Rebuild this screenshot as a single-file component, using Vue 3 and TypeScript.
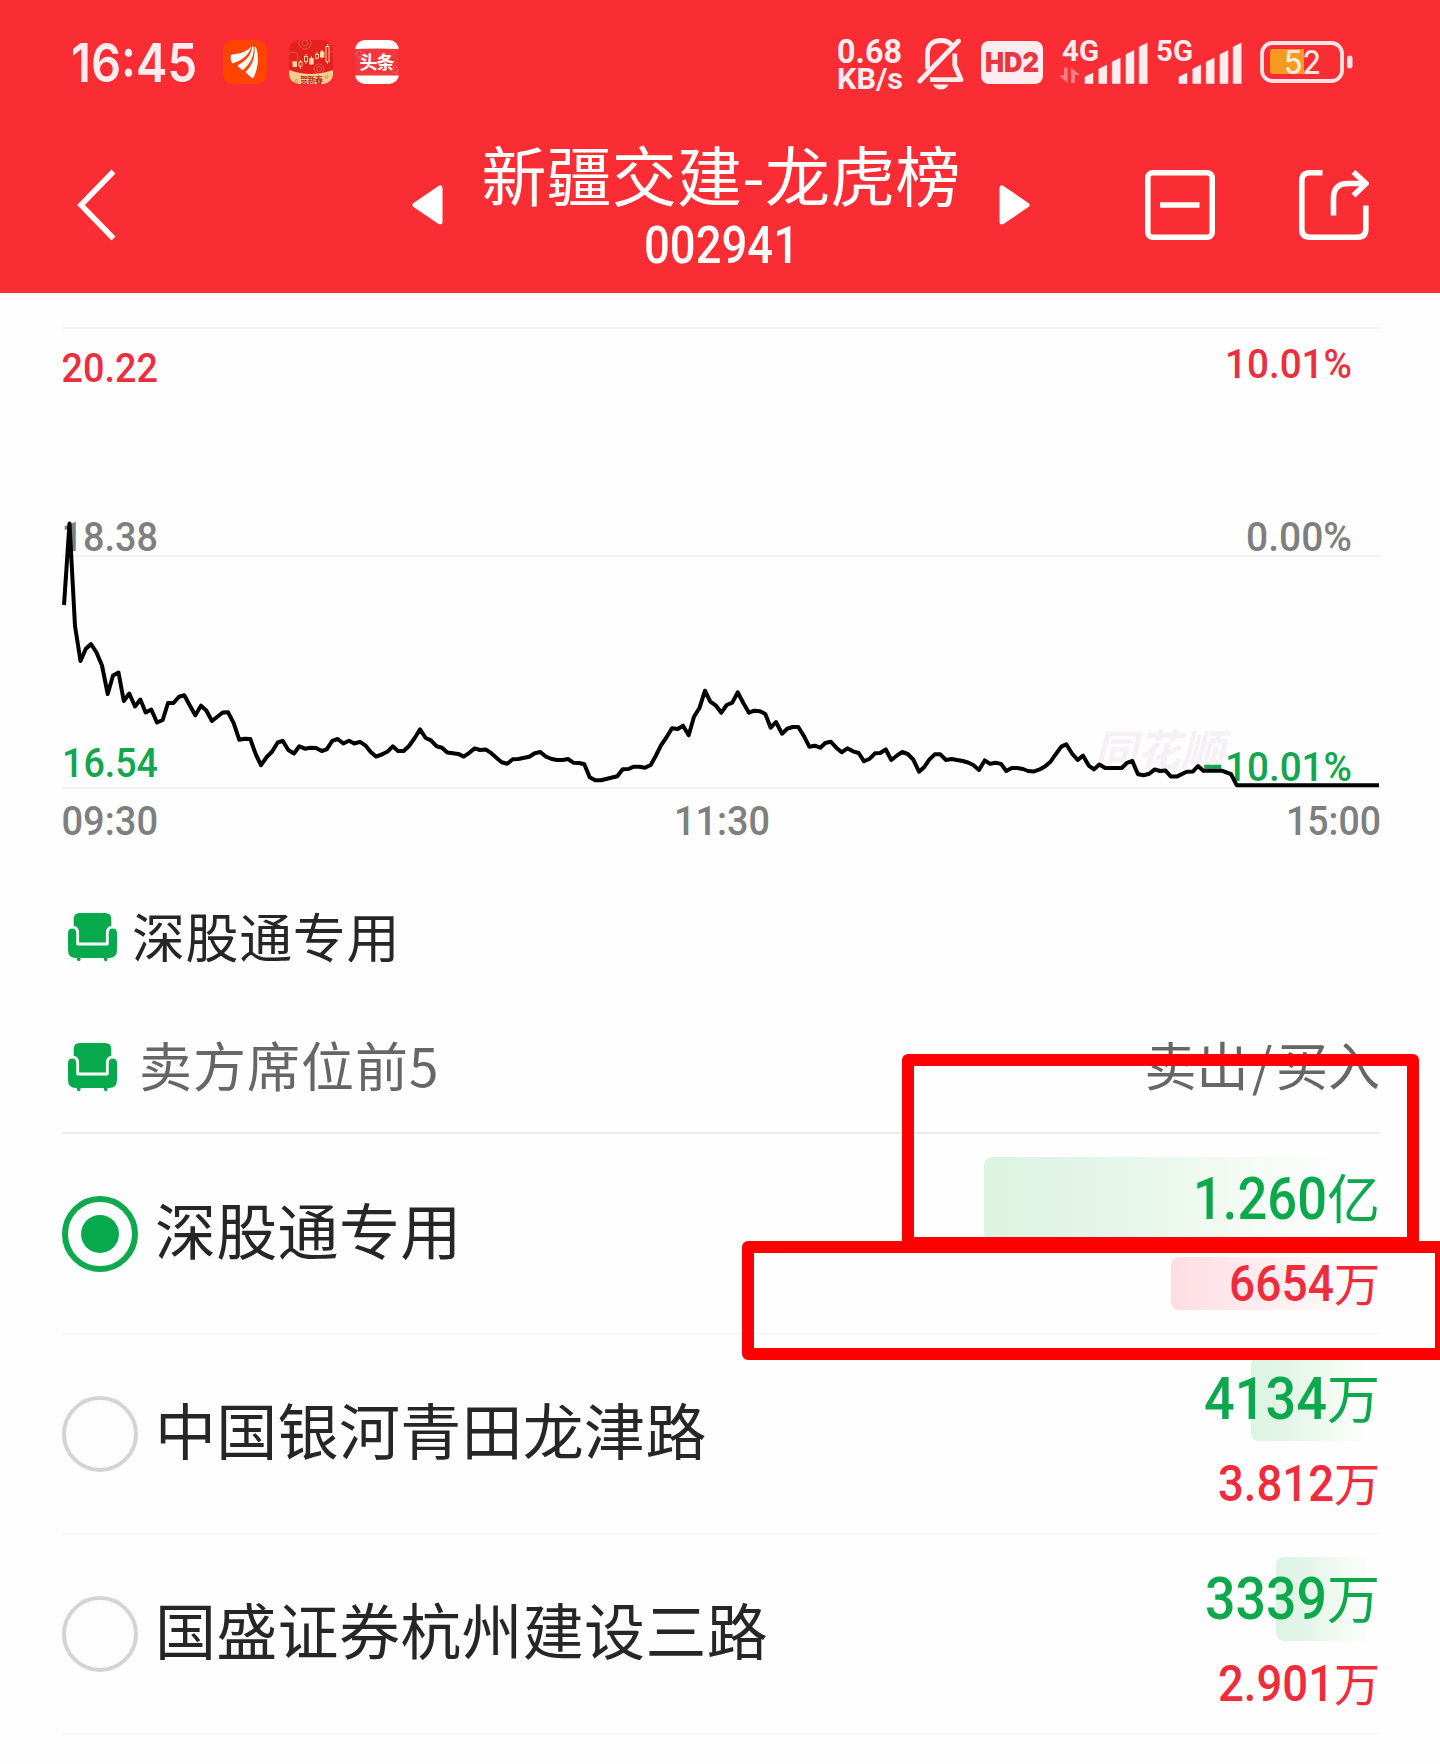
<script setup lang="ts">
import { defineComponent, h } from 'vue'

interface Seat {
  name: string
  selected: boolean
  sell: { value: string; width: number; unit: string; bar: number }
  buy: { value: string; width: number; unit: string; bar: number }
}

// Single line of digits set to a fixed advance width; its box is exactly cap-height tall.
const FitText = defineComponent({
  props: {
    text: { type: String, required: true },
    width: { type: Number, required: true },
    size: { type: Number, required: true },
  },
  setup(props) {
    return () => {
      const height = props.size * 0.711
      return h(
        'svg',
        { width: props.width, height, style: { overflow: 'visible', flex: 'none', display: 'block' } },
        [
          h(
            'text',
            {
              x: 0,
              y: height,
              fill: 'currentColor',
              'font-size': props.size,
              textLength: props.width,
              lengthAdjust: 'spacingAndGlyphs',
            },
            props.text,
          ),
        ],
      )
    }
  },
})

const seats: Seat[] = [
  {
    name: '深股通专用',
    selected: true,
    sell: { value: '1.260', width: 134, unit: '亿', bar: 398 },
    buy: { value: '6654', width: 105, unit: '万', bar: 211 },
  },
  {
    name: '中国银河青田龙津路',
    selected: false,
    sell: { value: '4134', width: 123, unit: '万', bar: 131 },
    buy: { value: '3.812', width: 116, unit: '万', bar: 0 },
  },
  {
    name: '国盛证券杭州建设三路',
    selected: false,
    sell: { value: '3339', width: 122, unit: '万', bar: 106 },
    buy: { value: '2.901', width: 116, unit: '万', bar: 0 },
  },
]

const signalBars = [
  { x: 0, top: 33 },
  { x: 13.8, top: 25 },
  { x: 27.2, top: 18 },
  { x: 41, top: 10.5 },
  { x: 54.2, top: 3 },
]

const priceLine = `64,605 69.5,523.5 75,626 80.5,661 85.7,649 91,644 96.5,652.5 102,665.5 107.7,694 113,675.5 118.5,672.5
123.8,701 129.3,693.5 135,706.5 140.3,699.5 145.7,712.5 151.3,709.5 157,722.5 162.7,720 168,703 173.5,703 179,696.7
184.3,695.3 189.7,705.3 195.3,715.3 201,705.7 206.3,710.5 212,721 217.3,716.7 222.7,712.5 228,712.2 233.7,723.2
239.3,739.8 244.7,738.7 250.3,739 255.7,754.2 261,765.2 266.7,757 272,751.8 277.7,742.5 282.7,740.8 288.3,750
294,753.5 299.3,746.3 305,748.7 310.7,747.7 316,748 321.7,751 326.7,749.4 332.3,740.8 337.7,739 343.3,743.5 349,740.8
354.3,743.5 360,741.8 365.3,745.3 370.7,752 376,756.6 381.7,754.5 387.3,751.8 392.7,746.3 398,751 403.7,751 409,746
414.7,738 420,729.4 425.7,738 431,740.4 436.7,746.3 442,747.7 447.3,752.5 458.3,753.9 463.7,756.6 469.3,752.8
474.7,748.4 480,750 485.7,749.4 491.3,753.2 496.7,758 501.7,762.3 507.3,763.7 512.7,759.3 518.3,759 529.3,756.7
534.7,753.3 540.3,752 546,756.7 551.7,759 557,760 562.7,760 568,759 573.3,762.7 579,763 584.3,764.3 589.7,777.3
595.3,780.3 601,780.3 617.3,776.3 622.7,769.3 628.3,769 634,766.7 639.3,766.7 645,767.7 650.7,765 655.7,756 661,745.3
666.7,737 672,728.3 677.7,729 683,725.7 688.7,735.3 694,716.7 699.3,708.3 705,690.7 710.3,701.7 716,705.7 721.3,712.7
726.7,705 732.3,702.7 737.7,692.3 743.3,703 749,712.7 754.3,710.7 760,711.3 765.3,714 770.7,727.7 776,722 782,733.7
787.3,728.7 792.7,727 798.3,727 803.7,735.7 809.3,746.7 814.7,745.7 820.3,747.7 825.3,743 830.7,741.7 836.3,747.7
841.7,752.3 847.3,748.3 853,751.3 858.7,753 864,761.3 869.7,758.7 875,753.3 880.3,753 885.7,749.3 891.3,760
896.7,755.7 902.3,752 907.7,754 913.3,759.7 919,771.7 924,767.3 929.3,759.7 934.7,754.3 940.3,754.3 946,760
951.7,759 962.7,761 968,762.5 973.3,765 979,770 984.7,760.4 990,763.9 995.3,762.8 1001,763.9 1006.3,771 1011.7,768
1017.3,768 1023,769 1028,771 1034,771.4 1039.7,769.4 1045.3,766.3 1050.7,761.4 1056,753.9 1061.3,746.6 1066.3,744.2
1072,753.5 1077.7,760 1083,755.6 1088.7,765.6 1094,769.4 1099.3,764.5 1105.3,768 1121.7,768 1127,762.8 1132.3,761
1138,774.2 1143.7,775.2 1149.3,773.8 1154.7,769.4 1160,771 1165.3,770.4 1171,776.6 1176.7,776.6 1186.7,771.8
1193,771.4 1198,766 1203.3,770.7 1221.7,770.7 1231,774.2 1236.7,785.2 1379,785.2`
</script>

<template>
  <div class="screen">
    <header class="top">
      <div class="status">
        <FitText class="clock" text="16:45" :width="126" :size="53" />
        <svg class="app first" width="44" height="44" viewBox="0 0 44 44">
          <rect width="44" height="44" rx="10" fill="#ff4400" />
          <g fill="#fff">
            <path d="M8.500 14.500C16 14 24 12 28 6.500C27 14 20 20 9.500 23.500C7.500 21 7 17 8.500 14.500Z" />
            <path d="M29 6.500C28.500 15 23 21 14.500 25.500C16 27.500 18 29.500 20 30C27.500 24 31.500 15 30.500 6.500Z" />
            <path d="M31.500 7C32.500 18 28.500 27 22.500 32C25 34.500 27.500 37 30 38.500C36 28 36 15 33 7.500Z" />
          </g>
        </svg>
        <svg class="app" width="44" height="44" viewBox="0 0 44 44">
          <clipPath id="festive"><rect width="44" height="44" rx="10" /></clipPath>
          <g clip-path="url(#festive)">
            <rect width="44" height="44" fill="#e4211f" />
            <g fill="none" stroke="#f0604c" stroke-width="0.800">
              <circle cx="16" cy="3" r="6" /><circle cx="16" cy="3" r="3" />
              <circle cx="4" cy="17" r="5" /><circle cx="30" cy="29" r="5" />
              <circle cx="30" cy="29" r="2.500" /><circle cx="42" cy="8" r="4" />
            </g>
            <path d="M0 30Q22 38 44 30V44H0Z" fill="#f9cd90" />
            <g fill="#fbe0a6" stroke="#fbe0a6" stroke-width="0.900">
              <path d="M11.500 20V29M17 14V24M22.500 16V25M28 12V19.500M33 10V18M38.500 4V24" />
              <rect x="4" y="22" width="3.500" height="4.500" />
              <rect x="10" y="22" width="3" height="4" fill="#e4211f" />
              <rect x="15.500" y="16.500" width="3" height="5" fill="#e4211f" />
              <rect x="20.800" y="18.500" width="3.400" height="5.500" />
              <rect x="26.500" y="14.500" width="3" height="3.500" fill="#e4211f" />
              <rect x="31.500" y="12" width="3.400" height="5" />
              <rect x="37" y="6.500" width="3" height="15" fill="#e4211f" />
            </g>
            <g fill="none" stroke="#c98a4a" stroke-width="0.900">
              <circle cx="7.500" cy="41" r="1.500" /><circle cx="37.500" cy="37" r="1.500" />
            </g>
            <text x="11" y="42.500" font-size="8" font-weight="700" fill="#b5261c" textLength="23">贺新春</text>
          </g>
        </svg>
        <svg class="app" width="44" height="44" viewBox="0 0 44 44">
          <rect width="44" height="44" rx="10" fill="#fff" />
          <path d="M0 9Q22 8 44 9V35.500H0Z" fill="#f2383d" />
          <g fill="none" stroke="#f9908a" stroke-width="1" stroke-dasharray="1.500 1.500">
            <circle cx="4" cy="14" r="3" /><circle cx="40" cy="30" r="3" />
          </g>
          <text x="4.500" y="29" font-size="18" font-weight="700" fill="#fff" textLength="35">头条</text>
        </svg>

        <div class="speed">
          <FitText text="0.68" :width="65" :size="32.500" />
          <FitText text="KB/s" :width="66" :size="30" />
        </div>
        <svg class="bell" width="48" height="52" viewBox="0 0 48 52" fill="none" stroke="#ffecee" stroke-width="4.800">
          <path d="M10.500 31.500V15.500C10.500 7 16 2.500 24 2.500C28.500 2.500 32 4 34.500 7" />
          <path d="M37.800 15.500V27.500L44 41.700H13" stroke-linejoin="round" />
          <path d="M2.800 43L41.500 3" stroke-linecap="round" />
          <path d="M16 46.500H31.500C30 50 27.500 51.500 24 51.500S17.500 50 16 46.500Z" fill="#ffecee" stroke="none" />
        </svg>
        <div class="hd"><FitText text="HD2" :width="54" :size="27" /></div>
        <svg class="signal" width="183" height="44" viewBox="0 0 183 44" fill="#ffecee">
          <text x="3" y="21" font-size="29.500" textLength="37" lengthAdjust="spacingAndGlyphs">4G</text>
          <text x="97" y="21" font-size="29.500" textLength="37" lengthAdjust="spacingAndGlyphs">5G</text>
          <path d="M5 27.500H8.500V43L0 35.500H5ZM12 43V27.500L21 35H16V43Z" fill="#fc7e84" />
          <path
            v-for="b in signalBars"
            :key="b.x"
            :d="`M${b.x + 26} ${b.top + 4}L${b.x + 34} ${b.top}V43.500H${b.x + 26}Z`"
            stroke="#ffecee"
            stroke-width="0.500"
            stroke-linejoin="round"
          />
          <path
            v-for="b in signalBars"
            :key="'n' + b.x"
            :d="`M${b.x + 120} ${b.top + 4}L${b.x + 128} ${b.top}V43.500H${b.x + 120}Z`"
            stroke="#ffecee"
            stroke-width="0.500"
            stroke-linejoin="round"
          />
        </svg>
        <svg class="battery" width="94" height="42" viewBox="0 0 94 42">
          <rect x="2" y="2" width="80" height="38" rx="10.500" fill="none" stroke="#ffe3e5" stroke-width="3.800" />
          <path d="M13 8H44V33H13Q10 33 10 30V11Q10 8 13 8Z" fill="#f79a20" />
          <rect x="87" y="14.500" width="5.500" height="13" rx="2.700" fill="#ffe3e5" />
          <text x="24" y="33" font-size="32" fill="#ffe9dc" textLength="37" lengthAdjust="spacingAndGlyphs">52</text>
        </svg>
      </div>

      <nav class="nav">
        <svg class="back" width="40" height="72" viewBox="0 0 40 72">
          <path d="M36.500 2.500L4 36L36.500 69.500" fill="none" stroke="#fff" stroke-width="5.500" />
        </svg>
        <svg class="prev" width="31" height="40" viewBox="0 0 31 40">
          <path d="M3 20L28 3V37Z" fill="#fff" stroke="#fff" stroke-width="5" stroke-linejoin="round" />
        </svg>
        <div class="heading">
          <h1>新疆交建-龙虎榜</h1>
          <FitText class="code" text="002941" :width="155" :size="51.500" />
        </div>
        <svg class="next" width="31" height="40" viewBox="0 0 31 40">
          <path d="M28 20L3 3V37Z" fill="#fff" stroke="#fff" stroke-width="5" stroke-linejoin="round" />
        </svg>
        <svg class="minus" width="70" height="70" viewBox="0 0 70 70" fill="none" stroke="#fff" stroke-width="5.600">
          <rect x="2.800" y="2.800" width="64.400" height="64.400" rx="5" />
          <path d="M15 35H54.500" />
        </svg>
        <svg class="share" width="70" height="70" viewBox="0 0 70 70" fill="none" stroke="#fff" stroke-width="5.600">
          <path d="M23.500 2.800H11Q2.800 2.800 2.800 11V59Q2.800 67.200 11 67.200H58.500Q66.800 67.200 66.800 59V35.500" />
          <path d="M34.500 45.500V28Q34.500 13.500 49 13.500H67" />
          <path d="M54.500 2L67 13.500L54.500 25.500" />
        </svg>
      </nav>
    </header>

    <svg class="chart" width="1440" height="560" viewBox="0 293 1440 560">
      <g stroke="#f4f2f4" stroke-width="2">
        <path d="M61.500 328H1382M61.500 556H1382M61.500 788H1382" />
      </g>
      <text class="mark" x="1094" y="766" textLength="130" lengthAdjust="spacingAndGlyphs">同花顺</text>
      <g class="axis">
        <text class="up" x="61.500" y="381.500" textLength="96.500" lengthAdjust="spacingAndGlyphs">20.22</text>
        <text class="up" x="1225" y="378" textLength="127" lengthAdjust="spacingAndGlyphs">10.01%</text>
        <text x="61.500" y="551" textLength="96.500" lengthAdjust="spacingAndGlyphs">18.38</text>
        <text x="1246" y="551" textLength="106" lengthAdjust="spacingAndGlyphs">0.00%</text>
        <text class="down" x="62" y="776.500" textLength="96" lengthAdjust="spacingAndGlyphs">16.54</text>
        <text class="down" x="1201" y="780.500">−</text>
        <text class="down" x="1225" y="780.500" textLength="127" lengthAdjust="spacingAndGlyphs">10.01%</text>
        <text x="61.500" y="834.500" textLength="96.500" lengthAdjust="spacingAndGlyphs">09:30</text>
        <text x="674" y="834.500" textLength="96" lengthAdjust="spacingAndGlyphs">11:30</text>
        <text x="1286" y="834.500" textLength="95" lengthAdjust="spacingAndGlyphs">15:00</text>
      </g>
      <polyline :points="priceLine" fill="none" stroke="#000" stroke-width="4" stroke-linejoin="round" />
    </svg>

    <svg width="0" height="0" class="defs">
      <symbol id="sofa" viewBox="0 0 49 49">
        <path d="M5.700 16V6Q5.700 0 11.700 0H37.300Q43.300 0 43.300 6V16Z" fill="#06a94b" />
        <path d="M5 15H44Q49 15.500 49 20V37Q49 45 41 45H8Q0 45 0 37V20Q0 15.500 5 15Z" fill="#06a94b" />
        <path d="M9 44H12.500V47Q10.700 49.500 9 47ZM36 44H39.500V47Q37.800 49.500 36 47Z" fill="#06a94b" />
        <path
          d="M2.500 14.200Q9.700 13 9.700 20.500V31H39.300V20.500Q39.300 13 46.500 14.200"
          fill="none" stroke="#fff" stroke-width="2.800" stroke-linejoin="round"
        />
      </symbol>
    </svg>

    <section class="picked">
      <svg class="sofa" width="49" height="49"><use href="#sofa" /></svg>
      <span>深股通专用</span>
    </section>

    <section class="caption">
      <svg class="sofa" width="49" height="49"><use href="#sofa" /></svg>
      <span class="label">卖方席位前5</span>
      <span class="sides">卖出<span class="slash">/</span>买入</span>
    </section>

    <ul class="seats">
      <li v-for="s in seats" :key="s.name" class="seat">
        <i class="radio" :class="{ on: s.selected }"></i>
        <span class="name">{{ s.name }}</span>
        <div class="amounts">
          <div class="amount sell">
            <i class="bar" :style="{ width: s.sell.bar + 'px' }"></i>
            <FitText :text="s.sell.value" :width="s.sell.width" :size="58.500" />
            <span>{{ s.sell.unit }}</span>
          </div>
          <div class="amount buy">
            <i class="bar" :style="{ width: s.buy.bar + 'px' }"></i>
            <FitText :text="s.buy.value" :width="s.buy.width" :size="49.500" />
            <span>{{ s.buy.unit }}</span>
          </div>
        </div>
      </li>
    </ul>

    <div class="frame frame-sell"></div>
    <div class="frame frame-buy"></div>
  </div>
</template>

<style>
body {
  margin: 0;
  background: #fefefe;
}
</style>

<style scoped>
.screen {
  position: relative;
  width: 1440px;
  height: 1764px;
  overflow: hidden;
  background: #fefefe;
  color: #262626;
  font-family: "Noto Sans CJK SC", sans-serif;
}
.top {
  height: 293px;
  background: #f92d33;
  color: #fff;
}
.status {
  display: flex;
  align-items: center;
  height: 124px;
  padding-left: 71px;
  color: #ffecee;
}
.clock {
  margin-top: 2px;
  font-family: Inter, sans-serif;
  font-weight: 600;
}
.app {
  flex: none;
  margin-left: 22px;
}
.app.first {
  margin-left: 26px;
}
.speed {
  display: flex;
  flex-direction: column;
  gap: 5px;
  width: 66px;
  margin: 5px 0 0 438px;
  font-family: Roboto, sans-serif;
  font-weight: 700;
}
.bell {
  flex: none;
  margin: 3px 0 0 14px;
}
.hd {
  display: flex;
  flex: none;
  align-items: center;
  justify-content: center;
  box-sizing: border-box;
  width: 62px;
  height: 43px;
  padding-top: 1px;
  margin-left: 16px;
  border-radius: 8px;
  background: #ffecee;
  color: #e93640;
  font-family: Inter, sans-serif;
  font-weight: 900;
}
.signal {
  flex: none;
  margin-left: 16px;
  overflow: visible;
  font-family: Roboto, sans-serif;
  font-weight: 700;
}
.battery {
  flex: none;
  margin-left: 18px;
  overflow: visible;
  font-family: Inter, sans-serif;
  font-weight: 500;
}
.nav {
  display: flex;
  align-items: center;
  height: 161px;
}
.nav > svg {
  flex: none;
}
.back {
  margin-left: 77px;
}
.prev {
  margin-left: 295px;
}
.heading {
  display: flex;
  flex: none;
  flex-direction: column;
  align-items: center;
  width: 556px;
  height: 127px;
}
h1 {
  margin: 0;
  font-size: 65px;
  font-weight: 400;
  line-height: 65px;
  letter-spacing: 0.200px;
  white-space: nowrap;
}
.code {
  margin-top: 20px;
  font-family: Roboto, sans-serif;
  font-weight: 500;
}
.minus {
  margin-left: 115px;
}
.share {
  margin-left: 84px;
}
.chart {
  display: block;
}
.axis {
  font-family: Roboto, sans-serif;
  font-size: 41px;
  font-weight: 500;
  fill: #7f7f7f;
}
.axis .up {
  fill: #ec2f3f;
}
.axis .down {
  fill: #12a650;
}
.mark {
  font-size: 43px;
  font-style: italic;
  font-weight: 700;
  fill: #f5f0f4;
}
.defs {
  position: absolute;
}
.picked,
.caption {
  display: flex;
  align-items: center;
  box-sizing: border-box;
  font-size: 53px;
  line-height: 60px;
  letter-spacing: 0.600px;
}
.picked {
  height: 168px;
  padding-left: 68px;
}
.picked span {
  margin: -5px 0 0 15px;
}
.caption {
  height: 113px;
  margin: 0 60px 0 62px;
  padding: 0 0 19px 6px;
  border-bottom: 2px solid #edebed;
  color: #666;
}
.label {
  margin: -7px 0 0 22px;
  letter-spacing: 1px;
}
.sides {
  margin: -7px 0 0 auto;
  font-size: 52px;
  letter-spacing: 0;
}
.slash {
  margin: 0 3.500px;
}
.seats {
  margin: 0 60px 0 62px;
  padding: 0;
  list-style: none;
}
.seat {
  display: flex;
  align-items: center;
  box-sizing: border-box;
  height: 200px;
  border-bottom: 1px solid #f2f2f2;
}
.radio {
  display: flex;
  box-sizing: border-box;
  width: 76px;
  height: 76px;
  margin-top: 1px;
  border: 4.500px solid #d5d3d6;
  border-radius: 50%;
}
.radio.on {
  align-items: center;
  justify-content: center;
  border: 6px solid #0ea84e;
}
.radio.on::after {
  width: 38px;
  height: 38px;
  border-radius: 50%;
  background: #06a94b;
  content: "";
}
.name {
  margin: -10px 0 0 17px;
  font-size: 61px;
  line-height: 70px;
  letter-spacing: 0.300px;
}
.amounts {
  display: flex;
  align-self: flex-start;
  flex-direction: column;
  gap: 16px;
  margin: 23px -2px 0 auto;
}
.amount {
  position: relative;
  display: flex;
  align-items: baseline;
  justify-content: flex-end;
}
.amount svg,
.amount span {
  position: relative;
}
.amount svg {
  font-family: Roboto, sans-serif;
  font-weight: 500;
}
.sell {
  height: 84px;
  color: #0ca84c;
  font-size: 53px;
  line-height: 79px;
}
.buy {
  height: 53px;
  color: #ee2c3b;
  font-size: 46px;
  line-height: 48px;
}
.amount span {
  margin-right: 2px;
}
.bar {
  position: absolute;
  top: 0;
  right: 0;
  height: 100%;
  border-radius: 8px 0 0 8px;
}
.sell .bar {
  background: linear-gradient(90deg, #dcf4e1, #e4f5ea 30%, #f1faf1 60%, rgba(254, 254, 254, 0) 90%);
}
.buy .bar {
  background: linear-gradient(90deg, #ffdde3, #ffebee 40%, rgba(254, 254, 254, 0) 95%);
}
.frame {
  position: absolute;
  box-sizing: border-box;
  border: 12px solid #f00;
  border-radius: 6px;
}
.frame-sell {
  top: 1054px;
  left: 902px;
  width: 517px;
  height: 195px;
}
.frame-buy {
  top: 1241px;
  left: 742px;
  width: 705px;
  height: 119px;
}
</style>
